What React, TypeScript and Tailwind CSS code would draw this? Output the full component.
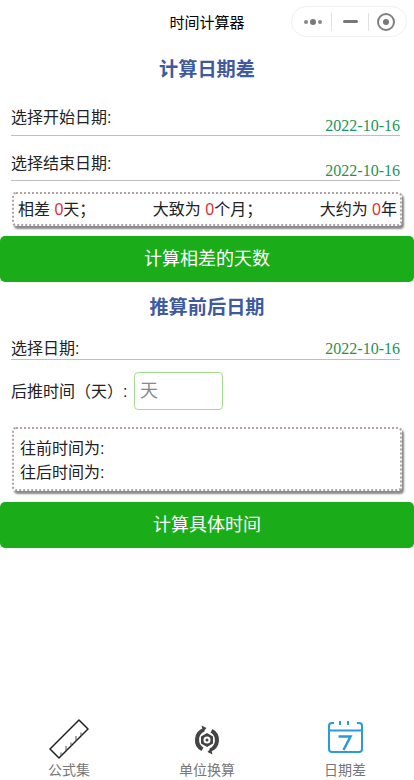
import React from "react";

const sans = "font-['Liberation_Sans','Noto_Sans_CJK_SC',sans-serif]";

function DateRow({ label, offset, labelTop, dateLeading }: { label: string; offset: string; labelTop: string; dateLeading: string }) {
  return (
    <div className={`ml-[11px] mr-[14px] flex justify-between border-b border-[#bfbfbf] ${offset}`}>
      <span className={`text-[16px] leading-[24px] text-[#222] ${labelTop}`}>{label}</span>
      <span className={`self-end font-['Liberation_Serif',serif] text-[16px] text-[#1c9459] ${dateLeading}`}>
        2022-10-16
      </span>
    </div>
  );
}

function Capsule() {
  return (
    <div className="absolute right-[7px] top-[6px] flex h-[31px] w-[116px] items-center rounded-full border border-[#f0f0f0] bg-white">
      <div className="flex w-[39px] items-center justify-center gap-[2px] pl-[2px]">
        <span className="h-[4px] w-[4px] rounded-full bg-[#888]" />
        <span className="h-[6px] w-[6px] rounded-full bg-[#777]" />
        <span className="h-[4px] w-[4px] rounded-full bg-[#888]" />
      </div>
      <span className="h-[18px] w-px bg-[#e2e2e2]" />
      <div className="flex w-[36px] items-center justify-center">
        <span className="h-[3px] w-[15px] rounded-full bg-[#777]" />
      </div>
      <span className="h-[18px] w-px bg-[#e2e2e2]" />
      <div className="flex flex-1 items-center justify-center pr-[3px]">
        <span className="flex h-[18px] w-[18px] items-center justify-center rounded-full border-2 border-[#808080]">
          <span className="h-[6px] w-[6px] rounded-full bg-[#777]" />
        </span>
      </div>
    </div>
  );
}

function RulerIcon() {
  return (
    <svg width="40" height="40" viewBox="0 0 40 40" fill="none" stroke="#222" strokeLinejoin="round">
      <path d="M1 30 L30 1 L39 10 L10 39 Z" strokeWidth="1.500" />
      <path d="M12 37 V33.500 M17 32 V27 M22 27 V23.500 M27 22 V17 M32 17 V13.500" strokeWidth="1" stroke="#555" />
    </svg>
  );
}

function ConvertIcon() {
  return (
    <svg width="28" height="30" viewBox="0 0 28 30" fill="none">
      <path d="M11 3 A12.500 12.500 0 0 0 8.500 26 L10.500 22.500 A9 9 0 0 1 11.500 6.500 Z" fill="#444" />
      <path d="M8.500 0.500 L13.500 3 L10 7 Z" fill="#444" />
      <path d="M17 27 A12.500 12.500 0 0 0 19.500 4 L17.500 7.500 A9 9 0 0 1 16.500 23.500 Z" fill="#444" />
      <path d="M19.500 29.500 L14.500 27 L18 23 Z" fill="#444" />
      <path d="M14 8 L20 11.500 L20 18.500 L14 22 L8 18.500 L8 11.500 Z" fill="#444" />
      <circle cx="14" cy="15" r="3.500" fill="#fff" />
      <circle cx="14" cy="15" r="1.500" fill="#444" />
    </svg>
  );
}

function CalendarIcon() {
  return (
    <svg width="35" height="33" viewBox="0 0 35 33" fill="none" stroke="#2a9bd8" strokeWidth="2">
      <path d="M6 3 H4 A3 3 0 0 0 1 6 V29 A3 3 0 0 0 4 32 H31 A3 3 0 0 0 34 29 V6 A3 3 0 0 0 31 3 H29" />
      <path d="M1 10.500 H34" />
      <path d="M12 1 V5 M20 1 V5" />
      <path d="M10.500 16.500 H22.500 L15.500 30" strokeWidth="2.500" />
    </svg>
  );
}

function TabItem({ label, icon, height }: { label: string; icon: React.ReactNode; height: string }) {
  return (
    <div className="flex flex-col items-center">
      <div className={`flex items-end justify-center ${height}`}>{icon}</div>
      <span className="text-[14px] leading-[16px] text-[#777]">{label}</span>
    </div>
  );
}

export default function App() {
  return (
    <div className={`relative flex h-[780px] w-[414px] flex-col overflow-hidden bg-white ${sans}`}>
      <header className="relative h-[44px] shrink-0">
        <div className="pt-[12px] text-center text-[15px] leading-[21px] text-black">时间计算器</div>
        <Capsule />
      </header>

      <h2 className="mt-[12px] text-center text-[19.2px] font-bold leading-[28px] text-[#3f5a9e]">计算日期差</h2>

      <DateRow label="选择开始日期:" offset="mt-[21px] h-[31px]" labelTop="pt-[1px]" dateLeading="leading-[18px]" />
      <DateRow label="选择结束日期:" offset="mt-[14px] h-[31px]" labelTop="pt-[2px]" dateLeading="leading-[18px]" />

      <div className="mx-[12px] mt-[11px] flex h-[34px] items-center justify-between rounded-[4px] border-2 border-dotted border-[#b0a5a5] bg-white pl-[4px] pr-[3px] pt-[1px] text-[16px] text-[#222] shadow-[2px_3px_2px_#8a8a8a]">
        <span>相差 <span className="text-[#e0303a]">0</span>天；</span>
        <span>大致为 <span className="text-[#e0303a]">0</span>个月；</span>
        <span>大约为 <span className="text-[#e0303a]">0</span>年</span>
      </div>

      <button className="mt-[10px] h-[46px] w-full shrink-0 rounded-[5px] bg-[#1aad19] text-[18px] text-white">
        计算相差的天数
      </button>

      <h2 className="mt-[12px] text-center text-[19.2px] font-bold leading-[28px] text-[#3f5a9e]">推算前后日期</h2>

      <DateRow label="选择日期:" offset="mt-[14px] h-[24px]" labelTop="pt-[1px]" dateLeading="leading-[20px]" />

      <div className="ml-[11px] mt-[12px] flex h-[38px] items-center text-[16px] text-[#222]">
        <span className="w-[123px] pt-[2px]">后推时间（天）:</span>
        <div className="flex h-[38px] w-[89px] items-center rounded-[4px] border border-[#a3dc8f] pl-[5px] text-[18px] text-[#888]">
          天
        </div>
      </div>

      <div className="mx-[12px] mt-[17px] flex h-[64px] flex-col justify-center rounded-[4px] border-2 border-dotted border-[#b0a5a5] bg-white pl-[6px] pt-[3px] text-[16px] leading-[24px] text-[#222] shadow-[2px_3px_2px_#8a8a8a]">
        <div>往前时间为:</div>
        <div>往后时间为:</div>
      </div>

      <button className="mt-[11px] h-[46px] w-full shrink-0 rounded-[5px] bg-[#1aad19] text-[18px] text-white">
        计算具体时间
      </button>

      <nav className="mt-auto grid h-[62px] grid-cols-3">
        <TabItem label="公式集" height="h-[44px] pb-[3px]" icon={<RulerIcon />} />
        <TabItem label="单位换算" height="h-[44px] pb-[7px]" icon={<ConvertIcon />} />
        <TabItem label="日期差" height="h-[44px] pb-[9px]" icon={<CalendarIcon />} />
      </nav>
    </div>
  );
}
